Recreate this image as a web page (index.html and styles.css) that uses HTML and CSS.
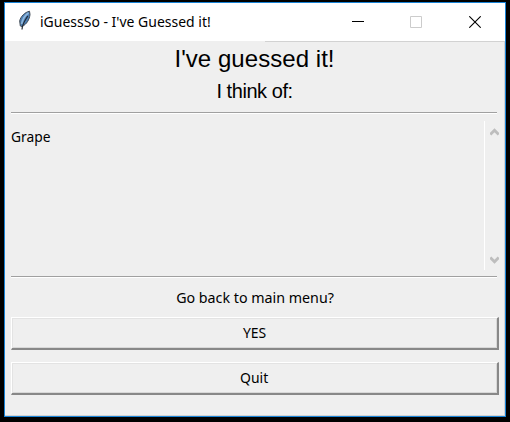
FILE: index.html
```html
<!DOCTYPE html>
<html lang="en">
<head>
<meta charset="utf-8">
<title>iGuessSo - I've Guessed it!</title>
<link rel="stylesheet" href="styles.css">
</head>
<body>
<div class="window">
  <header class="titlebar">
    <svg class="feather" width="14" height="22" viewBox="0 0 14 22">
      <path d="M11.500 1.200C7 2.200 2.500 6.500 1.700 11L2.300 16L4 16.500C8.500 14.500 11.500 9.500 12 4.500Z" fill="#4c7fb5" stroke="#424b55" stroke-width="1"/>
      <path d="M10.500 3C6.500 5.500 4.700 9 3.600 14" fill="none" stroke="#8fb7dc" stroke-width="1.800"/>
      <path d="M9.800 6C7.500 10 4.500 13 4 19.500" fill="none" stroke="#222a34" stroke-width="1.200"/>
    </svg>
    <span class="caption">iGuessSo - I've Guessed it!</span>
    <div class="controls">
      <svg width="12" height="12" viewBox="0 0 12 12"><path d="M0 5.500H12" stroke="#000"/></svg>
      <svg width="12" height="12" viewBox="0 0 12 12"><path d="M.5 .5H11.500V11.500H.5Z" fill="none" stroke="#ccc"/></svg>
      <svg width="12" height="12" viewBox="0 0 12 12"><path d="M.3 .3L11.700 11.700M11.700 .3L.3 11.700" stroke="#000" stroke-width="1.100"/></svg>
    </div>
  </header>
  <main class="client">
    <h1>I've guessed it!</h1>
    <h2>I think of:</h2>
    <div class="separator"></div>
    <section class="answer">
      <p><span class="label">Grape</span></p>
      <div class="scrollbar">
        <svg width="9" height="8" viewBox="0 0 9 8"><path d="M.3 6.500L4.500 2.300L8.700 6.500" fill="none" stroke="#bdbdbd" stroke-width="2.800"/></svg>
        <svg width="9" height="8" viewBox="0 0 9 8"><path d="M.3 1.500L4.500 5.700L8.700 1.500" fill="none" stroke="#bdbdbd" stroke-width="2.800"/></svg>
      </div>
    </section>
    <div class="separator"></div>
    <p class="question"><span class="label">Go back to main menu?</span></p>
    <button type="button"><span class="label">YES</span></button>
    <button type="button"><span class="label">Quit</span></button>
  </main>
</div>
</body>
</html>
```

FILE: styles.css
```css
* { box-sizing: border-box; }
body {
  margin: 0;
  padding: 2px 4px 5px;
  height: 422px;
  background: #000;
  color: #000;
  font-family: "Noto Sans", sans-serif;
  overflow: hidden;
}
.window {
  width: 502px;
  height: 415px;
  border: 1px solid #1883d7;
  background: #efefef;
}
.titlebar {
  display: flex;
  align-items: center;
  height: 38px;
  padding: 0 24px 0 13px;
  background: #fff;
}
.feather { margin-top: -2px; }
.caption {
  margin: -2px 0 0 8px;
  font-size: 15px;
  white-space: nowrap;
  transform: scaleX(.932);
  transform-origin: left;
}
.controls {
  display: flex;
  gap: 46px;
  margin-left: auto;
}
.controls svg { display: block; }
.controls svg:last-child { margin-left: 1px; }
.client {
  height: 375px;
  padding: 0 6px;
  border-right: 1px solid #d2d2d2;
  border-bottom: 1px solid #d2d2d2;
  background: linear-gradient(#d2d2d2, #d2d2d2) 260px 0 / 240px 1px no-repeat;
}
h1, h2 {
  margin: 0;
  font-family: "Liberation Sans", sans-serif;
  font-weight: 400;
  text-align: center;
}
h1 { height: 36px; font-size: 24px; line-height: 36px; letter-spacing: .05px; }
h2 { height: 35px; font-size: 20px; line-height: 29px; letter-spacing: -.45px; }
.separator {
  width: 486px;
  height: 2px;
  border-top: 1px solid #a0a0a0;
  border-bottom: 1px solid #fff;
}
.answer {
  display: flex;
  justify-content: space-between;
  height: 162px;
  padding: 7px 0 6px;
}
p { margin: 0; font-size: 15px; }
.answer p { padding-top: 5px; line-height: 20px; }
.answer .label { transform: scaleX(.92); transform-origin: left; }
.label {
  display: inline-block;
  transform: scaleX(.93);
  white-space: nowrap;
}
.scrollbar {
  display: flex;
  flex-direction: column;
  justify-content: space-between;
  width: 15px;
  margin-right: -1px;
  padding: 7px 0 6px 5px;
  border-left: 1px solid #fff;
}
.question { height: 39px; padding-left: 1px; line-height: 38px; text-align: center; }
.question .label { transform: scaleX(.95); }
button {
  display: block;
  width: 488px;
  height: 33px;
  margin: 0 0 12px;
  padding: 0 0 3px;
  border: solid;
  border-width: 1px 2px 2px 1px;
  border-color: #fff #888 #888 #fff;
  background: #efefef;
  box-shadow: inset 1px 1px #e3e3e3, inset -1px -1px #d8d8d8;
  font: 15px "Noto Sans", sans-serif;
  color: #000;
}
```
